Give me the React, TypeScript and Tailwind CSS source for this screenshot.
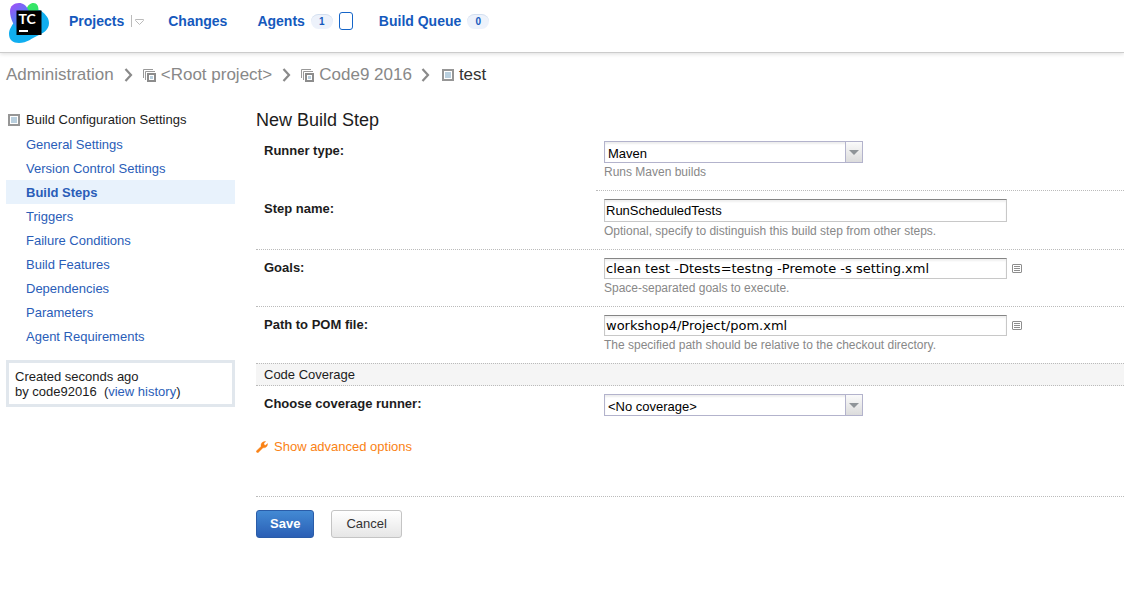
import type { ReactNode } from "react";

const navLink = "font-bold text-[14px] leading-5 text-[#1559bd] hover:underline";
const sideLinks = [
  "General Settings",
  "Version Control Settings",
  "Build Steps",
  "Triggers",
  "Failure Conditions",
  "Build Features",
  "Dependencies",
  "Parameters",
  "Agent Requirements",
];

function Logo() {
  return (
    <svg width="40" height="40" viewBox="0 0 40 40" role="img" aria-label="TeamCity">
      <defs>
        <linearGradient id="violet" x1="0" y1="0" x2="0.6" y2="1">
          <stop offset="0.1" stopColor="#9b52f8" />
          <stop offset="0.5" stopColor="#6a70f5" />
          <stop offset="1" stopColor="#12a8f0" />
        </linearGradient>
        <linearGradient id="lime" x1="0" y1="0" x2="1" y2="1">
          <stop offset="0" stopColor="#3bea62" />
          <stop offset="0.6" stopColor="#30e070" />
          <stop offset="1" stopColor="#10b4e0" />
        </linearGradient>
      </defs>
      <path d="M17 7C19 2 21 0 24.500 0C28 0 29.500 3 29.500 7L39 16L30 14Z" fill="url(#lime)" />
      <path d="M31 7C35 10 40 14 40 20C40 27 34 30 30 32C23 35 18 40 10 40C4 40 0 37 0 31C0 26 3 23 5 19L10 12Z" fill="#10aef0" />
      <path d="M10 0C14 0 17 2 20 8L8 26L4 20C2 16 1 12 1 8C1 3 5 0 10 0Z" fill="url(#violet)" />
      <rect x="7.500" y="7.500" width="25" height="24.500" fill="#000" />
      <text x="9.500" y="21" fontSize="14" fontWeight="700" fontFamily="Lato, sans-serif" fill="#fff">TC</text>
      <rect x="10" y="27" width="9" height="2" fill="#fff" />
    </svg>
  );
}

function ConfigIcon() {
  return (
    <svg width="12" height="12" viewBox="0 0 12 12" className="shrink-0" aria-hidden="true">
      <rect x="1" y="1" width="10" height="10" fill="#fff" stroke="#969696" strokeWidth="2" />
      <rect x="3" y="3" width="6" height="6" fill="#b9cfde" />
    </svg>
  );
}

function ProjectIcon() {
  return (
    <svg width="13" height="13" viewBox="0 0 13 13" className="shrink-0" aria-hidden="true">
      <path d="M0.500 9V0.500H10M2.500 11V2.500H12" fill="none" stroke="#999" />
      <rect x="5" y="5" width="7" height="7" fill="#fff" stroke="#8c8c8c" strokeWidth="2" />
      <rect x="7" y="7" width="3" height="3" fill="#b9cfde" />
    </svg>
  );
}

function Chevron() {
  return (
    <svg width="9" height="14" viewBox="0 0 9 14" className="shrink-0" aria-hidden="true">
      <path d="M1.500 1L7 7L1.500 13" fill="none" stroke="#8a8a8a" strokeWidth="2.200" />
    </svg>
  );
}

function Badge({ children }: { children: ReactNode }) {
  return (
    <span className="flex h-[15px] w-[22px] items-center justify-center rounded-full border-t border-[#d3dff0] bg-[#edf2fb] text-[10px] font-bold text-[#1559bd]">
      {children}
    </span>
  );
}

function Row({ id, label, hint, divider, children }: {
  id: string; label: string; hint?: string; divider?: string; children: ReactNode;
}) {
  return (
    <div>
      <div className={hint ? "flex pt-2 pb-[9px]" : "flex pt-2 pb-[11px]"}>
        <label htmlFor={id} className="w-[340px] shrink-0 self-start font-bold leading-5">{label}</label>
        <div className="min-w-0 flex-1">
          <div className="flex items-center gap-[5px]">{children}</div>
          {hint && <p className="text-[12px] leading-[18px] text-[#888]">{hint}</p>}
        </div>
      </div>
      {divider && <div className={divider} />}
    </div>
  );
}

const fullDivider = "-ml-2 border-t border-dotted border-[#bbb]";
const fieldDivider = "ml-[332px] border-t border-dotted border-[#bbb]";

function Select({ id, options }: { id: string; options: string[] }) {
  return (
    <div className="relative w-[259px]">
      <select id={id} className="block h-[22px] w-full appearance-none rounded-none border border-[#b3b3cc] bg-white pt-[3px] pl-[3px] text-[13px] leading-4 text-black shadow-[inset_0_2px_2px_#eee]">
        {options.map((o) => <option key={o}>{o}</option>)}
      </select>
      <span className="pointer-events-none absolute inset-y-px right-px flex w-[17px] items-center justify-center border-l border-[#b3b3cc] bg-linear-to-b from-[#fafafa] to-[#dcdcdc]">
        <svg width="10" height="5" viewBox="0 0 10 5" aria-hidden="true"><path d="M0 0H10L5 5Z" fill="#8f9498" /></svg>
      </span>
    </div>
  );
}

const inputBase = "w-[403px] border border-[#c8c8c8] border-t-[#858585] bg-white pl-px text-black shadow-[inset_0_2px_2px_#f0f0f0]";

function ParameterField({ id, value }: { id: string; value: string }) {
  return (
    <>
      <input id={id} defaultValue={value} className={`${inputBase} h-[21px] font-['DejaVu_Sans',Verdana,sans-serif] text-[13px]`} />
      <button type="button" aria-label="Edit in larger area">
        <svg width="10" height="9" viewBox="0 0 10 9" aria-hidden="true">
          <rect x="0.500" y="0.500" width="9" height="8" rx="0.500" fill="#fff" stroke="#8e8e8e" />
          <path d="M2 2.500H8M2 4.500H8M2 6.500H8" stroke="#8e8e8e" />
        </svg>
      </button>
    </>
  );
}

export default function App() {
  return (
    <div className="min-h-screen bg-white font-['Liberation_Sans',Arial,sans-serif] text-[13px] text-[#1c1c1c]">
      <header className="flex h-[53px] items-start border-b border-[#ccc] pt-[3px] pl-[9px] shadow-[0_1px_4px_#ddd]">
        <a href="#home" className="shrink-0"><Logo /></a>
        <nav className="flex items-center gap-6 pt-2 pl-5" aria-label="Main">
          <div className="flex items-center gap-[7px]">
            <a href="#projects" className={navLink}>Projects</a>
            <button type="button" aria-label="Project list">
              <svg width="13" height="12" viewBox="0 0 13 12" aria-hidden="true">
                <path d="M0.500 0V12" stroke="#bbb" />
                <path d="M4.500 4.500H12.500V5.500L8.500 9.500L4.500 5.500Z" fill="#fff" stroke="#bbb" />
              </svg>
            </button>
          </div>
          <a href="#changes" className={navLink}>Changes</a>
          <div className="flex items-center gap-[6px] pl-[6px]">
            <a href="#agents" className={navLink}>Agents</a>
            <Badge>1</Badge>
            <button type="button" aria-label="Agent status" className="h-[18px] w-[14px] rounded-[3px] border border-[#1565c8]" />
          </div>
          <div className="flex items-center gap-[6px] pl-[2px]">
            <a href="#queue" className={navLink}>Build Queue</a>
            <Badge>0</Badge>
          </div>
        </nav>
      </header>

      <nav className="flex items-center pt-3 pl-[6px] text-[17px] leading-5 text-[#888]" aria-label="Breadcrumb">
        <a href="#administration">Administration</a>
        <span className="px-[10px]"><Chevron /></span>
        <a href="#root" className="flex items-center gap-[5px]"><ProjectIcon />&lt;Root project&gt;</a>
        <span className="px-[10px]"><Chevron /></span>
        <a href="#code9" className="flex items-center gap-[5px]"><ProjectIcon />Code9 2016</a>
        <span className="pr-3 pl-[9px]"><Chevron /></span>
        <span className="flex items-center gap-[5px] text-[#333]"><ConfigIcon />test</span>
      </nav>

      <div className="flex items-start pl-1.5">
        <aside className="w-[229px] shrink-0 pt-[23px]">
          <h2 className="flex h-6 items-center gap-[6px] pl-0.5"><ConfigIcon />Build Configuration Settings</h2>
          <ul>
            {sideLinks.map((name) => (
              <li key={name} className={name === "Build Steps" ? "bg-[#e8f2fc] font-bold" : ""}>
                <a href="#settings" className="block pt-px pl-5 leading-[23px] text-[#2a5db8] hover:underline">{name}</a>
              </li>
            ))}
          </ul>
          <div className="mt-3 border-[3px] border-[#e1e7ed] px-1.5 pt-1.5 pb-[5px] leading-[15px]">
            <p>Created seconds ago</p>
            <p>by code92016 &nbsp;(<a href="#history" className="text-[#2a5db8] hover:underline">view history</a>)</p>
          </div>
        </aside>

        <main className="ml-[21px] min-w-0 flex-1 pt-[23px]">
          <h1 className="text-[18px] leading-6">New Build Step</h1>
          <form onSubmit={(e) => e.preventDefault()}>
            <div className="pt-px pl-2">
              <Row id="runner" label="Runner type:" hint="Runs Maven builds" divider={fieldDivider}>
                <Select id="runner" options={["Maven"]} />
              </Row>
              <Row id="step" label="Step name:" hint="Optional, specify to distinguish this build step from other steps." divider={fullDivider}>
                <input id="step" defaultValue="RunScheduledTests" className={`${inputBase} h-[23px]`} />
              </Row>
              <Row id="goals" label="Goals:" hint="Space-separated goals to execute." divider={fullDivider}>
                <ParameterField id="goals" value="clean test -Dtests=testng -Premote -s setting.xml" />
              </Row>
              <Row id="pom" label="Path to POM file:" hint="The specified path should be relative to the checkout directory.">
                <ParameterField id="pom" value="workshop4/Project/pom.xml" />
              </Row>
              <h2 className="-ml-2 border-y border-dotted border-[#bbb] bg-[#f5f5f5] pl-2 leading-[21px]">Code Coverage</h2>
              <Row id="coverage" label="Choose coverage runner:">
                <Select id="coverage" options={["<No coverage>"]} />
              </Row>
            </div>
            <button type="button" className="mt-[10px] flex h-5 items-center gap-[6px] text-[#fa8214]">
              <svg width="12" height="12" viewBox="0 0 12 12" aria-hidden="true">
                <path d="M0.400 9.900L5.100 5.400C4.600 3.200 5.700 0.900 8.500 0.500L9.700 0.600L7.900 2.300L8.200 3.900L9.700 4.200L11.500 2.600C11.800 5 9.900 7.200 7 6.800L2.200 11.600C1.200 12.100 -0.100 10.900 0.400 9.900Z" fill="#fa8214" stroke="#fa8214" strokeWidth="0.400" />
              </svg>
              Show advanced options
            </button>
            <div className="mt-[39px] flex gap-[17px] border-t border-dotted border-[#bbb] pt-[13px]">
              <button type="submit" className="h-7 rounded-[3px] border border-[#2a5ca8] bg-linear-to-b from-[#438ad4] to-[#2b5fb5] px-[13px] font-bold text-white">Save</button>
              <button type="button" className="h-7 rounded-[3px] border border-[#c4c4c4] bg-linear-to-b from-white to-[#e6e6e6] px-[14px] text-[#333]">Cancel</button>
            </div>
          </form>
        </main>
      </div>
    </div>
  );
}
